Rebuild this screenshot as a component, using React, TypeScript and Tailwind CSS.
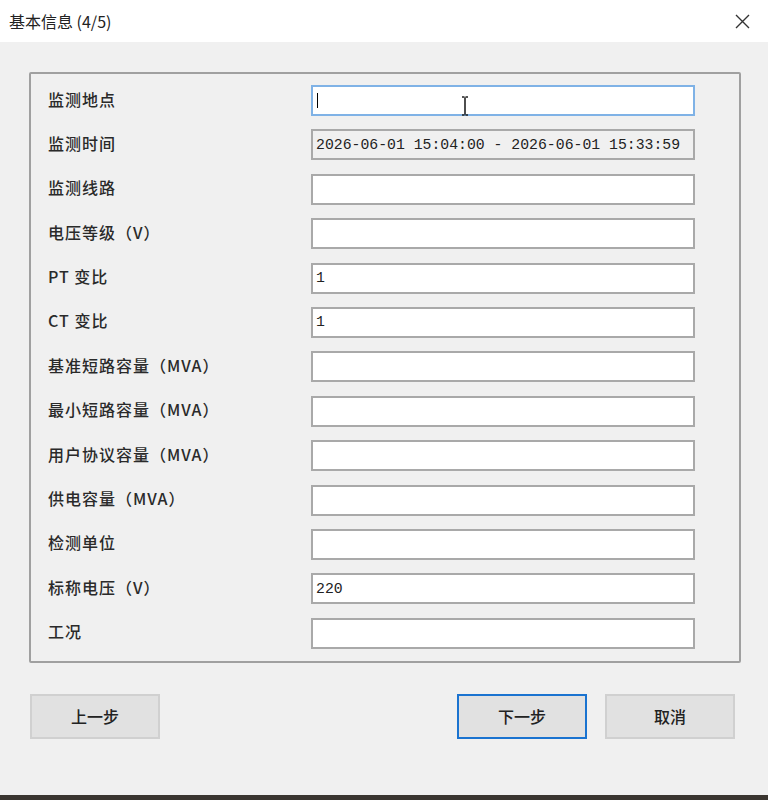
import React from 'react';

const fields: { label: string; value?: string; focused?: boolean; readOnly?: boolean }[] = [
  { label: '监测地点', focused: true },
  { label: '监测时间', value: '2026-06-01 15:04:00 - 2026-06-01 15:33:59', readOnly: true },
  { label: '监测线路' },
  { label: '电压等级（V）' },
  { label: 'PT 变比', value: '1' },
  { label: 'CT 变比', value: '1' },
  { label: '基准短路容量（MVA）' },
  { label: '最小短路容量（MVA）' },
  { label: '用户协议容量（MVA）' },
  { label: '供电容量（MVA）' },
  { label: '检测单位' },
  { label: '标称电压（V）', value: '220' },
  { label: '工况' },
];

const cjk = { fontFamily: '"Noto Sans CJK SC", "Noto Sans", sans-serif' };
const mono = { fontFamily: '"Liberation Mono", "Noto Sans CJK SC", monospace' };

function Field({ label, value, focused, readOnly }: (typeof fields)[number]) {
  return (
    <div className="flex items-center h-[31px]">
      <div className="w-[280px] pl-[17px] pb-[4px] text-[16px] tracking-[1px] text-[#2a2a2a] font-medium" style={cjk}>
        {label}
      </div>
      <div
        className={
          'relative w-[384px] h-[31px] flex items-center px-[3px] text-[14.8px] text-[#222] ' +
          (focused
            ? 'border-2 border-[#7fb2e6] bg-white'
            : readOnly
              ? 'border-2 border-[#a9a9a9] bg-[#f0f0f0]'
              : 'border-2 border-[#a9a9a9] bg-white')
        }
        style={mono}
      >
        {value}
        {focused && (
          <>
            <span className="w-px h-[15px] bg-black ml-[1px]" />
            <svg className="absolute left-[148px] top-[9px]" width="8" height="20" viewBox="0 0 8 20">
              <path d="M1 1h2.5M4.5 1H7M4 1.5v17M1 19h2.5M4.5 19H7" stroke="#222" strokeWidth="1.6" fill="none" />
            </svg>
          </>
        )}
      </div>
    </div>
  );
}

function Button({ children, primary }: { children: React.ReactNode; primary?: boolean }) {
  return (
    <button
      className={
        'w-[130px] h-[45px] bg-[#e1e1e1] text-[16px] text-[#222] font-medium ' +
        (primary ? 'border-2 border-[#1a73d0]' : 'border-2 border-[#d0d0d0]')
      }
      style={cjk}
    >
      {children}
    </button>
  );
}

export default function App() {
  return (
    <div className="w-[768px] h-[800px] flex flex-col bg-[#f0f0f0] overflow-hidden">
      <div className="h-[42px] bg-white flex items-center justify-between pl-[9px] pr-[18px]">
        <span className="text-[16px] text-[#222]" style={cjk}>
          基本信息 (4/5)
        </span>
        <svg width="15" height="15" viewBox="0 0 15 15">
          <path d="M1 1L14 14M14 1L1 14" stroke="#333" strokeWidth="1.4" />
        </svg>
      </div>
      <div className="flex-1 flex flex-col px-[29px] pt-[30px]">
        <div className="w-[712px] border-2 border-[#a0a0a0] rounded-[2px] pt-[11px] pb-[12px] flex flex-col gap-[13.4px]">
          {fields.map((f) => (
            <Field key={f.label} {...f} />
          ))}
        </div>
        <div className="mt-[31px] pl-[1px] pr-[4px] flex items-center">
          <Button>上一步</Button>
          <div className="flex-1" />
          <Button primary>下一步</Button>
          <div className="w-[18px]" />
          <Button>取消</Button>
        </div>
      </div>
      <div className="h-[5px] bg-[#3a3530]" />
    </div>
  );
}
